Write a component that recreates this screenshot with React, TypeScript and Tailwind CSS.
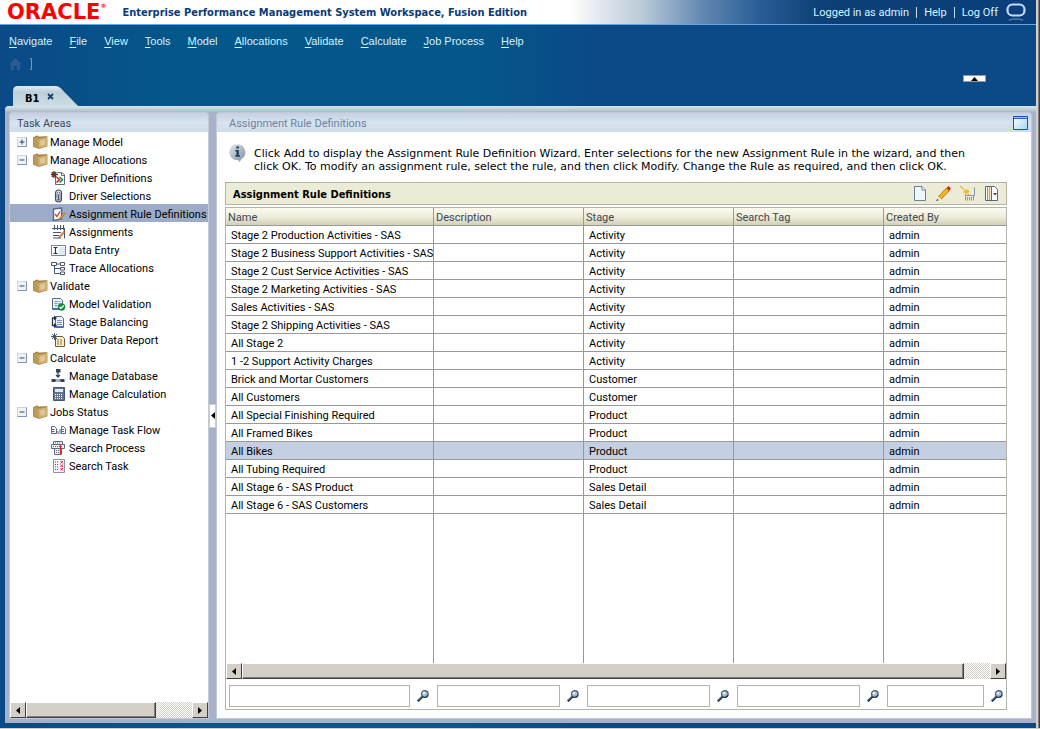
import React, { useState } from 'react';

type IconName =
  | 'driverDef' | 'clip' | 'rule' | 'assign' | 'entry' | 'trace' | 'validate'
  | 'balance' | 'report' | 'database' | 'calc' | 'flow' | 'process' | 'task';

const drawings: Record<IconName, React.ReactNode> = {
  driverDef: (
    <>
      <path d="M4.5 4.5v9h9v-10l-3-2h-4" fill="#fff" stroke="#5f6b80" />
      <path d="M10.5 1.5v3h3" fill="none" stroke="#5f6b80" />
      <path d="M3 0v7M0 3.500h7M.8 1l4.500 5M5.300 1l-4.500 5" stroke="#5b3a22" strokeWidth="1.300" />
      <path d="M5.500 6l3 2.500-3 3" fill="none" stroke="#d01f1f" strokeWidth="1.500" />
      <path d="M8.500 6l3 2.500-3 3" fill="none" stroke="#1c8a3c" strokeWidth="1.500" />
    </>
  ),
  clip: (
    <>
      <rect x="4.500" y="1" width="6" height="12" rx="3" fill="#fff" stroke="#3f5068" strokeWidth="1.200" />
      <path d="M7.500 5v6M6 9.500v-5a1.500 1.500 0 013 0v5.500a1.500 1.500 0 01-3 0" fill="none" stroke="#3f5068" strokeWidth=".9" />
    </>
  ),
  rule: (
    <>
      <path d="M2.500 2l8-1v11l-8 1.500z" fill="#fff" stroke="#54698a" strokeWidth="1.400" />
      <path d="M4 7l2 2.500L9 4.500" fill="none" stroke="#e03a24" strokeWidth="1.300" />
      <path d="M13.500 5.500L8.500 11l-1 2 2-1L14 6.500z" fill="#f4b21c" stroke="#9a5f14" strokeWidth=".6" />
    </>
  ),
  assign: (
    <>
      <path d="M2 4h11.500v9.500H2z" fill="#fff" />
      <path d="M1 3.500h13M3.500 0v5M6.500 0v5M9.500 0v5M12.500 0v5M2 7.500h8M2 10.500h6M2 13h8M13.500 4v9.500" stroke="#46566e" fill="none" />
      <path d="M13 6L8.500 11l-1 2 2-1L14 7z" fill="#f4a41c" stroke="#b03b14" strokeWidth=".6" />
    </>
  ),
  entry: (
    <>
      <path d="M.5 2.500h14v10H.5z" fill="#fff" stroke="#7485a0" />
      <path d="M8 4h6v8H8z" fill="#dfeaf2" />
      <path d="M2.500 4.500h4M2.500 10.500h4M4.500 4.500v6" stroke="#27364c" strokeWidth="1.200" />
    </>
  ),
  trace: (
    <path d="M.5 1.500h5v3h-5zM9.500 1.500h4v3h-4zM9.500 6.500h4v2.500h-4zM9.500 11h4v2.500h-4zM5.500 3h4M3.500 4.500v8h6M3.500 7.500h6" fill="none" stroke="#46566e" />
  ),
  validate: (
    <>
      <path d="M1.500 1.500h8l2 2v9h-10z" fill="#f5fbff" stroke="#54698a" />
      <path d="M3 4.500h7M3 6.500h7M3 8.500h5M5 3v7" stroke="#8aa5c2" strokeWidth=".8" />
      <path d="M2 11.500h6" stroke="#3a7be0" strokeWidth="1.200" />
      <circle cx="10.500" cy="10" r="3.700" fill="#178a3c" />
      <path d="M8.500 10l1.500 1.500 2.700-3" fill="none" stroke="#fff" strokeWidth="1.200" />
    </>
  ),
  balance: (
    <>
      <path d="M4.500 1.500h6l2 2v9h-8z" fill="#eef6fb" stroke="#54698a" />
      <path d="M6 5.500h5M6 7.500h5M6 9.500h5" stroke="#7890b0" />
      <path d="M5 11.500h7" stroke="#3a7be0" />
      <path d="M4 3H1.500v7.500H4" fill="none" stroke="#26364e" strokeWidth="1.300" />
      <path d="M3 .5L6 3 3 5.500zM3 8l3 2.500L3 13z" fill="#26364e" />
    </>
  ),
  report: (
    <>
      <path d="M4.500 3.500h7l2 2v8h-9z" fill="#fdf0c8" stroke="#6b5836" />
      <path d="M6 7h6M6 9h6M6 11h6" stroke="#8a7444" strokeDasharray="2 1" />
      <path d="M3.500 0v7M0 3.500h7M1 1l5 5M6 1L1 6" stroke="#46566e" />
    </>
  ),
  database: (
    <>
      <path d="M5 0h4.500v3.500H5zM.5 10h4v3h-4zM9.500 10h4v3h-4z" fill="#34445c" />
      <path d="M7 3v5M5 6l2 2 2-2M4 11.500h6" fill="none" stroke="#34445c" strokeWidth="1.300" />
      <path d="M5 10h4v3H5z" fill="#9db0c4" />
    </>
  ),
  calc: (
    <>
      <path d="M2.500.5h11v13h-11z" fill="#65748c" stroke="#46566e" />
      <path d="M4 2h8v3H4z" fill="#dfe9f0" />
      <path d="M4 7.500h8M4 9.500h8M4 11.500h8" stroke="#fff" strokeDasharray="1 1" />
    </>
  ),
  flow: (
    <>
      <path d="M.5 3.500h3l2 2v5h-5zM10.500 3.500h2l2 2v5h-4z" fill="#fff" stroke="#54698a" />
      <path d="M0 6.500h3.500M0 8.500h3.500M10.500 6.500H13M10.500 8.500H13M7 8v3M9 6v5" stroke="#54698a" />
    </>
  ),
  process: (
    <>
      <path d="M2.500.5h9v3h-9zM.5 3.500h13v4H.5zM3.500 7.500h7v6h-7z" fill="#eef3f7" stroke="#5c6b82" />
      <path d="M2 5.500h10M5 9.500h4M5 11.500h4M4 2h6" stroke="#5c6b82" strokeDasharray="1 1" />
      <path d="M9.500 4v9" stroke="#e02020" strokeWidth="1.300" />
    </>
  ),
  task: (
    <>
      <path d="M2.500.5h11v13h-11z" fill="#f4f8fa" stroke="#8394aa" />
      <path d="M4 3h4M4 5.500h4M4 8h4M4 10.500h4" stroke="#46566e" strokeDasharray="1 1" />
      <path d="M9.500 2l2.500 2.500M12 2L9.500 4.500M9.500 5.500L12 8M12 5.500L9.500 8M9.500 9l2.500 2.500M12 9l-2.500 2.500" stroke="#d82828" />
    </>
  ),
};

const TreeIcon = ({ name }: { name: IconName }) => (
  <svg viewBox="0 0 15 14" className="h-3.5 w-[15px] shrink-0">{drawings[name]}</svg>
);

const Folder = () => (
  <svg viewBox="0 0 15 14" className="h-3.5 w-[15px] shrink-0">
    <path d="M.5 2.500L4 .8l2 1.200 8-.5v9.700L6 13.500.5 11.500z" fill="#a88443" stroke="#8f6c30" strokeWidth=".6" />
    <path d="M5 4l9.200-2v9.300L5.500 13.300z" fill="#cfb073" />
    <path d="M7 5.500l5-1v5l-4.500 1.300z" fill="#dfc896" />
    <path d="M1 3l3-1.500L5.500 3l-.5 1v9L1 11z" fill="#bd9a58" />
  </svg>
);

type Group = { label: string; open: boolean; items: { label: string; icon: IconName }[] };

const groups: Group[] = [
  { label: 'Manage Model', open: false, items: [] },
  {
    label: 'Manage Allocations',
    open: true,
    items: [
      { label: 'Driver Definitions', icon: 'driverDef' },
      { label: 'Driver Selections', icon: 'clip' },
      { label: 'Assignment Rule Definitions', icon: 'rule' },
      { label: 'Assignments', icon: 'assign' },
      { label: 'Data Entry', icon: 'entry' },
      { label: 'Trace Allocations', icon: 'trace' },
    ],
  },
  {
    label: 'Validate',
    open: true,
    items: [
      { label: 'Model Validation', icon: 'validate' },
      { label: 'Stage Balancing', icon: 'balance' },
      { label: 'Driver Data Report', icon: 'report' },
    ],
  },
  {
    label: 'Calculate',
    open: true,
    items: [
      { label: 'Manage Database', icon: 'database' },
      { label: 'Manage Calculation', icon: 'calc' },
    ],
  },
  {
    label: 'Jobs Status',
    open: true,
    items: [
      { label: 'Manage Task Flow', icon: 'flow' },
      { label: 'Search Process', icon: 'process' },
      { label: 'Search Task', icon: 'task' },
    ],
  },
];

const rules: [string, string][] = [
  ['Stage 2 Production Activities - SAS', 'Activity'],
  ['Stage 2 Business Support Activities - SAS', 'Activity'],
  ['Stage 2 Cust Service Activities - SAS', 'Activity'],
  ['Stage 2 Marketing Activities - SAS', 'Activity'],
  ['Sales Activities - SAS', 'Activity'],
  ['Stage 2 Shipping Activities - SAS', 'Activity'],
  ['All Stage 2', 'Activity'],
  ['1 -2 Support Activity Charges', 'Activity'],
  ['Brick and Mortar Customers', 'Customer'],
  ['All Customers', 'Customer'],
  ['All Special Finishing Required', 'Product'],
  ['All Framed Bikes', 'Product'],
  ['All Bikes', 'Product'],
  ['All Tubing Required', 'Product'],
  ['All Stage 6 - SAS Product', 'Sales Detail'],
  ['All Stage 6 - SAS Customers', 'Sales Detail'],
];

const columns = ['Name', 'Description', 'Stage', 'Search Tag', 'Created By'];
const menus = ['Navigate', 'File', 'View', 'Tools', 'Model', 'Allocations', 'Validate', 'Calculate', 'Job Process', 'Help'];

const ArrowButton = ({ dir }: { dir: 'left' | 'right' }) => (
  <button
    aria-label={`Scroll ${dir}`}
    className="flex h-4 w-4 shrink-0 items-center justify-center border border-t-white border-r-[#404040] border-b-[#404040] border-l-white bg-[#d4d0c8]"
  >
    <svg viewBox="0 0 4 7" className="h-[7px] w-1">
      <path d={dir === 'left' ? 'M4 0v7L0 3.500z' : 'M0 0v7l4-3.500z'} />
    </svg>
  </button>
);

const ScrollBar = ({ thumb }: { thumb: string }) => (
  <div className="flex h-4 shrink-0 bg-[#e9e7e3]">
    <ArrowButton dir="left" />
    <div className="min-w-0 flex-1 bg-[repeating-conic-gradient(#d4d0c8_0_25%,#ffffff_0_50%)] bg-[length:2px_2px]">
      <div className={`${thumb} h-4 border border-t-white border-r-[#404040] border-b-[#404040] border-l-white bg-[#d4d0c8] shadow-[inset_-1px_-1px_0_#808080]`} />
    </div>
    <ArrowButton dir="right" />
  </div>
);

const Magnifier = () => (
  <svg viewBox="0 0 12 12" className="h-3 w-3">
    <path d="M.8 11.200L5.500 6.500" stroke="#1d3046" strokeWidth="2.400" />
    <path d="M.8 10.500L5 6.300" stroke="#8fa6bb" strokeWidth=".8" />
    <circle cx="7.800" cy="4" r="3.300" fill="#9db8d0" stroke="#4a6079" strokeWidth="1.300" />
    <circle cx="7" cy="3.200" r="1.400" fill="#e4f0f8" />
    <path d="M5.500 6.800q3.500 2 5.500-1.800" fill="none" stroke="#22384f" strokeWidth="1.100" />
  </svg>
);

const boldFont = "font-['DejaVu_Sans_Condensed',Tahoma,sans-serif] font-bold";

function Header() {
  return (
    <header className="flex h-[25px] items-center border-b border-[#64a8ea] bg-[linear-gradient(90deg,#fff_0,#fff_55%,#b9cad8_62%,#5f86b1_68%,#2c5f98_73%,#0d4076_79%,#0a3f7c_100%)] pl-[7px]">
      <div className="flex items-center whitespace-nowrap font-['DejaVu_Sans',sans-serif] text-[21px] leading-6 font-bold text-[#fe0000]">
        ORACLE<span className="self-start text-[6px] leading-3">®</span>
      </div>
      <h1 className={`${boldFont} ml-4 pt-0.5 whitespace-nowrap text-[#0a3a78]`}>
        Enterprise Performance Management System Workspace, Fusion Edition
      </h1>
      <div className="ml-auto flex items-center whitespace-nowrap text-[#d9f4ff]">
        <span className="pt-0.5">Logged in as admin</span>
        <span className="mx-[7px] h-[11px] w-px bg-[#c9dcd0]" />
        <a href="#help" className="pt-0.5">Help</a>
        <span className="mx-[7px] h-[11px] w-px bg-[#b5dff5]" />
        <a href="#logoff" className="pt-0.5">Log Off</a>
        <svg viewBox="0 0 20 19" className="mr-2.5 ml-2 h-[19px] w-5">
          <rect x="1.500" y="1.500" width="17" height="11" rx="5" fill="#0c3f80" stroke="#c5dbf7" strokeWidth="2.200" />
          <path d="M3 17.500c2-2 12-2 14 0" fill="none" stroke="#54799f" strokeWidth="1.500" />
        </svg>
      </div>
    </header>
  );
}

function TopNav() {
  return (
    <div className="flex h-[81px] flex-col text-[#d4f2fc]">
      <nav className="mt-[9px] flex h-3.5 items-center gap-[17px] pl-[9px] font-['Liberation_Sans',Arial,sans-serif]">
        {menus.map((m) => (
          <a key={m} href={`#${m}`} className="whitespace-nowrap">
            <span className="underline underline-offset-2">{m[0]}</span>{m.slice(1)}
          </a>
        ))}
      </nav>
      <div className="mt-2 flex h-4 items-center gap-2 pl-[9px]">
        <a href="#home" aria-label="Home">
          <svg viewBox="0 0 13 12" className="h-3 w-[13px]">
            <path d="M6.500 0L13 6.500h-2V12H8V8H5v4H2V6.500H0z" fill="#2a5c93" />
          </svg>
        </a>
        <svg viewBox="0 0 3 12" className="h-3 w-[3px]">
          <path d="M0 .5h1.500v11H0" fill="none" stroke="#7d97ad" />
        </svg>
      </div>
      <div className="mt-auto flex h-8 items-start">
        <div className="relative mt-3 ml-3 flex h-5 w-[66px] items-center pl-[13px] text-black">
          <svg viewBox="0 0 66 20" className="absolute inset-0 h-5 w-[66px]">
            <defs>
              <linearGradient id="tab" x2="0" y2="1">
                <stop offset="0" stopColor="#e3ecf1" />
                <stop offset=".3" stopColor="#bdd0da" />
                <stop offset="1" stopColor="#cddce2" />
              </linearGradient>
            </defs>
            <path d="M1 20V5q0-5 5-5h38q3 0 5 2.500L66 20z" fill="url(#tab)" />
          </svg>
          <b className={`${boldFont} relative mt-1.5`}>B1</b>
          <button aria-label="Close B1" className="relative ml-2">
            <svg viewBox="0 0 7 7" className="h-[7px] w-[7px]">
              <path d="M1 1l5 5M6 1L1 6" stroke="#173f72" strokeWidth="1.800" />
            </svg>
          </button>
        </div>
        <button
          aria-label="Collapse header"
          className="mt-px mr-[50px] ml-auto flex h-[7px] w-[23px] items-center justify-center border border-[#8e9bb0] bg-white"
        >
          <svg viewBox="0 0 7 4" className="h-1 w-[7px]"><path d="M3.500 0L7 4H0z" /></svg>
        </button>
      </div>
    </div>
  );
}

const panelTitle = 'flex h-[19px] shrink-0 items-center bg-[linear-gradient(#c3d0e0,#d7e4ee_50%,#cedbea)] pr-[3px]';

function TaskAreas() {
  const [selected, setSelected] = useState('Assignment Rule Definitions');
  return (
    <aside className="flex w-[200px] shrink-0 flex-col rounded-t border border-[#c3c8d4] bg-white">
      <div className={`${panelTitle} pl-[7px]`}>
        <h2 className="pt-[3px] text-[#3b475c]">Task Areas</h2>
      </div>
      <ul className="flex-1">
        {groups.map((g) => (
          <li key={g.label}>
            <div className="flex h-[18px] items-center pt-0.5 pl-[7px]">
              <button
                aria-label={`Toggle ${g.label}`}
                className="flex h-2.5 w-2.5 items-center justify-center border border-t-[#c9d5e2] border-r-[#8197b5] border-b-[#8197b5] border-l-[#c9d5e2] bg-[#eff4f8]"
              >
                <svg viewBox="0 0 6 6" className="h-1.5 w-1.5">
                  <path d={g.open ? 'M.5 3h5' : 'M.5 3h5M3 .5v5'} stroke="#34465f" />
                </svg>
              </button>
              <span className="ml-1.5 flex items-center gap-0.5 whitespace-nowrap">
                <Folder />
                <span className="pt-0.5">{g.label}</span>
              </span>
            </div>
            <ul>
              {g.items.map((it) => (
                <li key={it.label}>
                  <button
                    onClick={() => setSelected(it.label)}
                    className={`flex h-[18px] w-full items-center gap-[3px] pt-0.5 pl-[41px] whitespace-nowrap ${it.label === selected ? 'bg-[#9cabc8]' : ''}`}
                  >
                    <TreeIcon name={it.icon} />
                    <span className="pt-0.5">{it.label}</span>
                  </button>
                </li>
              ))}
            </ul>
          </li>
        ))}
      </ul>
      <ScrollBar thumb="mr-9" />
    </aside>
  );
}

function Tools() {
  return (
    <div className="ml-auto flex items-center gap-[9px] pr-2">
      <button aria-label="Add">
        <svg viewBox="0 0 14 15" className="h-[15px] w-3.5">
          <path d="M1.500.5h7.500l3.500 3.500v10.500h-11z" fill="#edf6fc" stroke="#6b7f9c" />
          <path d="M9 .5V4h3.500" fill="#fff" stroke="#6b7f9c" />
        </svg>
      </button>
      <button aria-label="Modify">
        <svg viewBox="0 0 15 15" className="h-[15px] w-[15px]">
          <path d="M2.500 10.500l8-8.500 2.800 2.800-8 8.200z" fill="#f7b515" stroke="#a86a10" strokeWidth=".8" />
          <path d="M10.500 2L12.500 0 15 2.500l-2 2.200z" fill="#d92020" />
          <path d="M2.500 10.500l2.800 2.500-4 1.200z" fill="#f6e4bf" />
          <path d="M.2 15l1-2 1.300 1.200z" fill="#222" />
        </svg>
      </button>
      <button aria-label="Clear">
        <svg viewBox="0 0 16 16" className="h-4 w-4">
          <path d="M0 0l4 3.500M8 8l1.500 1.500M5 9L9 4.500M3 6h2" stroke="#e2a51c" strokeWidth="1.200" strokeDasharray="1.500 .7" />
          <circle cx="6.500" cy="5.500" r="2.300" fill="#f8bd1e" />
          <path d="M14.500 1.500v8H5.500v5M7.500 11v3.500M9.500 11v3.500M11.500 11v3.500M13.500 9.500v5" fill="none" stroke="#7d8da5" strokeWidth=".9" />
        </svg>
      </button>
      <button aria-label="Columns">
        <svg viewBox="0 0 13 15" className="h-[15px] w-[13px]">
          <path d="M.5.5h9l3 3v11H.5z" fill="#fff" stroke="#54698a" />
          <path d="M2.500 1v13" stroke="#8496b0" />
          <path d="M4.500 1v13" stroke="#e7a424" strokeWidth="1.500" />
          <path d="M6.500 1v13" stroke="#54698a" />
          <path d="M8 7h4l-2 2.500z" fill="#34465f" />
        </svg>
      </button>
    </div>
  );
}

const filterGrid = 'grid grid-cols-[208px_150px_150px_150px_minmax(0,1fr)]';

function RuleTable() {
  const [selected, setSelected] = useState(12);
  return (
    <div className="mt-0.5 flex flex-1 flex-col border border-[#b3b3ac]">
      <table className="w-full table-fixed border-separate border-spacing-0">
        <colgroup>
          <col className="w-[208px]" /><col className="w-[150px]" /><col className="w-[150px]" /><col className="w-[150px]" /><col />
        </colgroup>
        <thead>
          <tr className="bg-[linear-gradient(#fbfaee,#eeecd9_50%,#cfccb3)]">
            {columns.map((c) => (
              <th key={c} scope="col" className="h-[18px] border-r border-b border-[#999] pt-[3px] pr-0 pb-0 pl-0.5 text-left font-normal text-[#3e4658] last:border-r-0">{c}</th>
            ))}
          </tr>
        </thead>
        <tbody>
          {rules.map(([name, stage], i) => (
            <tr key={name} onClick={() => setSelected(i)} className={i === selected ? 'bg-[#c5cfe2]' : ''}>
              {[name, '', stage, '', 'admin'].map((v, j) => (
                <td key={j} className="h-[18px] border-r border-b border-[#999] pt-[3px] pr-0 pb-0 pl-[5px] whitespace-nowrap last:border-r-0">{v}</td>
              ))}
            </tr>
          ))}
        </tbody>
      </table>
      <div className={`${filterGrid} flex-1`}>
        {columns.map((c) => <div key={c} className="border-r border-[#999] last:border-r-0" />)}
      </div>
      <ScrollBar thumb="mr-[26px]" />
      <div className={`${filterGrid} pt-[6px] pb-0.5`}>
        {columns.map((c) => (
          <div key={c} className="flex items-center gap-[7px] pr-[5px] pl-[3px] last:pr-[3px]">
            <input aria-label={`Filter by ${c}`} className="h-[22px] min-w-0 flex-1 border border-[#b3b3ac] bg-white px-1 outline-none" />
            <button aria-label={`Search ${c}`}><Magnifier /></button>
          </div>
        ))}
      </div>
    </div>
  );
}

function MainPanel() {
  return (
    <main className="flex min-w-0 flex-1 flex-col rounded-t border border-[#c3c8d4] bg-white">
      <div className={`${panelTitle} pl-3`}>
        <h2 className="pt-[3px] text-[#6f7fa5]">Assignment Rule Definitions</h2>
        <button aria-label="Maximize" className="ml-auto">
          <svg viewBox="0 0 15 14" className="h-3.5 w-[15px]">
            <defs>
              <linearGradient id="win" x2="1" y2="1">
                <stop offset="0" stopColor="#fff" />
                <stop offset="1" stopColor="#a4d6f4" />
              </linearGradient>
            </defs>
            <path d="M.5.500h14v13H.5z" fill="url(#win)" stroke="#1c4fc0" />
            <path d="M1 1.500h13" stroke="#8fc0f6" />
            <path d="M1 2.500h13" stroke="#2f66cc" />
          </svg>
        </button>
      </div>
      <div className="flex flex-1 flex-col pr-6 pb-2 pl-2">
        <div className="flex gap-2 pt-3 pr-4 pb-[9px] pl-1">
          <svg viewBox="0 0 17 18" className="h-[18px] w-[17px] shrink-0">
            <defs>
              <linearGradient id="info" x2="1" y2="1">
                <stop offset="0" stopColor="#dfe7ec" />
                <stop offset="1" stopColor="#7d909f" />
              </linearGradient>
            </defs>
            <path d="M8.500.3a8 8 0 014 14.800L10.500 18 9.500 16.200A8 8 0 118.500.3z" fill="url(#info)" />
            <path d="M7.300 2.500h2.600v2H7.300zM6.300 6h3.500v5.300h1.200v1.500H6.300v-1.500h1.200V7.500H6.300z" fill="#1d3f58" />
          </svg>
          <p className="pt-[3px] font-['DejaVu_Sans',Verdana,sans-serif] leading-[13px]">
            Click Add to display the Assignment Rule Definition Wizard. Enter selections for the new Assignment Rule in the wizard, and then click OK. To modify an assignment rule, select the rule, and then click Modify. Change the Rule as required, and then click OK.
          </p>
        </div>
        <div className="flex h-[23px] items-center border border-[#b3b3a2] bg-[#ebebd6] pl-[7px]">
          <h3 className={`${boldFont} pt-0.5`}>Assignment Rule Definitions</h3>
          <Tools />
        </div>
        <RuleTable />
      </div>
    </main>
  );
}

export default function App() {
  return (
    <div className="flex min-h-screen border-b border-[#d4d0c8] bg-[#0b4a87] font-[Roboto,Tahoma,sans-serif] text-[11px] leading-[14px] text-black">
      <div className="flex min-w-0 flex-1 flex-col bg-[linear-gradient(90deg,#0b4a87_0,#04578a_18%,#04578a_45%,#0b4a87_57%,#0b4a87_100%)]">
        <Header />
        <TopNav />
        <div className="mb-[5px] ml-[5px] flex flex-1 flex-col rounded-tl bg-[#a7b2ca] pr-1 pb-1 pl-1">
          <div className="-mx-1 h-1.5 rounded-tl bg-[linear-gradient(#dde7ea,#bccdd6_60%,#a9b9c8)]" />
          <div className="flex flex-1">
            <TaskAreas />
            <div className="flex w-[7px] shrink-0 items-center">
              <button
                aria-label="Collapse task areas"
                className="flex h-6 w-[7px] items-center justify-center border border-[#c9cdd6] bg-white"
              >
                <svg viewBox="0 0 4 7" className="h-[7px] w-1"><path d="M4 0v7L0 3.500z" /></svg>
              </button>
            </div>
            <MainPanel />
          </div>
        </div>
      </div>
      <div className="w-1 shrink-0 border-r border-[#404040] bg-[linear-gradient(90deg,#d4d0c8_66%,#808080_66%)]" />
    </div>
  );
}
